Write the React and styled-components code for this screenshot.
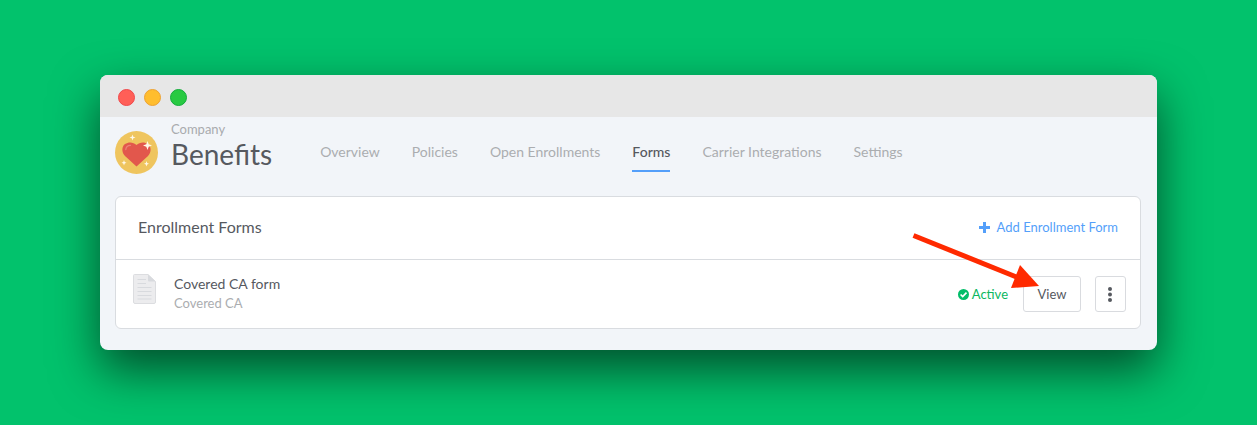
import React from "react";
import styled, { createGlobalStyle } from "styled-components";

const GlobalStyle = createGlobalStyle`
  *, *::before, *::after { box-sizing: border-box; }
  body {
    margin: 0;
    background: #02c26c;
    color: #56595f;
    font-family: Lato, "Liberation Sans", sans-serif;
    font-size: 14px;
    line-height: 20px;
  }
`;

const Page = styled.main`
  padding: 75px 100px;
`;

const Window = styled.div`
  border-radius: 8px;
  background: #f2f5f9;
  box-shadow: 0 20px 48px rgba(0, 0, 0, 0.6);
`;

const TitleBar = styled.div`
  display: flex;
  align-items: center;
  gap: 9px;
  height: 42px;
  padding: 2px 18px 0;
  border-radius: 8px 8px 0 0;
  background: #e7e7e7;
`;

const Light = styled.span`
  width: 17px;
  height: 17px;
  border: 1px solid ${(p) => p.$edge};
  border-radius: 50%;
  background: ${(p) => p.$fill};
`;

const Content = styled.div`
  padding: 0 16px 21px 15px;
`;

const Header = styled.header`
  display: flex;
  align-items: flex-start;
  height: 79px;
`;

const Badge = styled.svg`
  flex: none;
  width: 43px;
  height: 43px;
  margin-top: 14px;
`;

const Heading = styled.div`
  margin: 4px 48px 0 13px;
`;

const Eyebrow = styled.p`
  margin: 0;
  font-size: 13px;
  line-height: 16px;
  color: #a9abae;
`;

const Title = styled.h1`
  margin: 0;
  font-size: 28px;
  line-height: 34px;
  font-weight: 400;
`;

const Tabs = styled.nav`
  display: flex;
  gap: 32px;
  margin-top: 25px;
  white-space: nowrap;
`;

const Tab = styled.a`
  padding-bottom: 8px;
  border-bottom: 2px solid ${(p) => (p.$active ? "#549ffa" : "transparent")};
  color: ${(p) => (p.$active ? "#56595f" : "#abadb0")};
  font-weight: ${(p) => (p.$active ? 500 : 400)};
  text-decoration: none;
`;

const Card = styled.section`
  border: 1px solid #d9dce0;
  border-radius: 6px;
  background: #fff;
`;

const CardHeader = styled.div`
  display: flex;
  align-items: center;
  justify-content: space-between;
  height: 63px;
  padding: 0 22px 2px;
  border-bottom: 1px solid #d9dce0;
`;

const CardTitle = styled.h2`
  margin: 0;
  font-size: 16px;
  line-height: 20px;
  font-weight: 400;
`;

const AddButton = styled.button`
  display: flex;
  align-items: center;
  gap: 7px;
  padding: 0;
  border: 0;
  background: none;
  color: #549ffa;
  font: inherit;
  font-size: 13px;
  cursor: pointer;
`;

const FormRow = styled.div`
  display: flex;
  align-items: center;
  height: 68px;
  padding: 0 14px 0 17px;
`;

const FileIcon = styled.svg`
  flex: none;
  align-self: flex-start;
  width: 23px;
  height: 30px;
  margin: 14px 18px 0 0;
`;

const FormInfo = styled.div`
  flex: 1;
  padding-bottom: 2px;
`;

const FormName = styled.div`
  font-size: 14px;
  line-height: 20px;
`;

const Carrier = styled.div`
  font-size: 13px;
  line-height: 18px;
  color: #abadb0;
`;

const Status = styled.span`
  display: flex;
  align-items: center;
  gap: 3px;
  margin-right: 15px;
  color: #0cb75f;
  font-size: 13px;
`;

const ViewSlot = styled.div`
  position: relative;
  margin-right: 14px;
`;

const OutlineButton = styled.button`
  display: flex;
  align-items: center;
  justify-content: center;
  width: ${(p) => (p.$compact ? 31 : 58)}px;
  height: 36px;
  padding: 0;
  border: 1px solid #d9dbdf;
  border-radius: 3px;
  background: #fff;
  color: #56595f;
  font: inherit;
  font-size: 13px;
  cursor: pointer;
`;

const Pointer = styled.svg`
  position: absolute;
  right: 42px;
  bottom: 22px;
  width: 130px;
  height: 60px;
  pointer-events: none;
`;

const tabs = ["Overview", "Policies", "Open Enrollments", "Forms", "Carrier Integrations", "Settings"];

const HeartBadge = () => (
  <Badge viewBox="0 0 43 43" aria-hidden="true">
    <circle cx="21.5" cy="21.5" r="21.5" fill="#efc55f" />
    <path d="M21.5 35.5 10 25C6.500 21.500 6.500 15.600 10 13C13.600 10.600 18.500 11 21.500 14C24.500 11 29.400 10.600 33 13C36.500 15.600 36.500 21.500 33 25Z" fill="#e2574c" />
    <path d="M10.800 18.500C11 16 13 14.300 15.500 14.300" fill="none" stroke="#eb8178" strokeWidth="1.300" strokeLinecap="round" />
    <g fill="#fff8e8">
      <path d="M32.500 10 33.700 13.300 37 14.500 33.700 15.700 32.500 19 31.300 15.700 28 14.500 31.300 13.300Z" />
      <path d="M17.500 3.500 18.300 5.700 20.500 6.500 18.300 7.300 17.500 9.500 16.700 7.300 14.500 6.500 16.700 5.700Z" />
      <path d="M9 29 9.700 31 11.500 31.700 9.700 32.400 9 34.400 8.300 32.400 6.500 31.700 8.300 31Z" />
      <path d="M31.500 30 32.200 32 34 32.700 32.200 33.400 31.500 35.400 30.800 33.400 29 32.700 30.800 32Z" />
    </g>
  </Badge>
);

export default function App() {
  return (
    <>
      <GlobalStyle />
      <Page>
        <Window>
          <TitleBar>
            <Light $fill="#ff5f57" $edge="#f0484a" />
            <Light $fill="#ffbd2e" $edge="#eda233" />
            <Light $fill="#28ca42" $edge="#14ac3c" />
          </TitleBar>
          <Content>
            <Header>
              <HeartBadge />
              <Heading>
                <Eyebrow>Company</Eyebrow>
                <Title>Benefits</Title>
              </Heading>
              <Tabs aria-label="Benefits">
                {tabs.map((name) => (
                  <Tab key={name} href="#" $active={name === "Forms"} aria-current={name === "Forms" ? "page" : undefined}>
                    {name}
                  </Tab>
                ))}
              </Tabs>
            </Header>
            <Card>
              <CardHeader>
                <CardTitle>Enrollment Forms</CardTitle>
                <AddButton type="button">
                  <svg width="11" height="11" viewBox="0 0 11 11" aria-hidden="true">
                    <path d="M4 0H7V4H11V7H7V11H4V7H0V4H4Z" fill="#549ffa" />
                  </svg>
                  Add Enrollment Form
                </AddButton>
              </CardHeader>
              <FormRow>
                <FileIcon viewBox="0 0 23 30" aria-hidden="true">
                  <path d="M1.500.5H15L22.500 7.500V28Q22.500 29.500 21 29.500H2Q.5 29.500.5 28V1.500Q.5.5 1.500.5Z" fill="#ececee" stroke="#dcdde0" />
                  <path d="M15 .5 22.500 7.500H16Q15 7.500 15 6.500Z" fill="#d8dade" />
                  <path d="M4.500 5.500H13M4.500 9.500H13M4.500 13.500H18.500M4.500 17.500H18.500M4.500 21.500H18.500M4.500 25H18.500" stroke="#d8dade" />
                </FileIcon>
                <FormInfo>
                  <FormName>Covered CA form</FormName>
                  <Carrier>Covered CA</Carrier>
                </FormInfo>
                <Status>
                  <svg width="11" height="11" viewBox="0 0 11 11" aria-hidden="true">
                    <circle cx="5.500" cy="5.500" r="5.500" fill="#02bd69" />
                    <path d="M2.600 5.500 4.700 7.500 8.500 3.700" fill="none" stroke="#fff" strokeWidth="1.700" />
                  </svg>
                  Active
                </Status>
                <ViewSlot>
                  <OutlineButton type="button">View</OutlineButton>
                  <Pointer viewBox="0 0 130 60" aria-hidden="true">
                    <path d="M4.500 5.500 110 48" stroke="#ff2a00" strokeWidth="5" />
                    <path d="M130 56 111 35 102 58Z" fill="#ff2a00" />
                  </Pointer>
                </ViewSlot>
                <OutlineButton type="button" $compact aria-label="More actions">
                  <svg width="5" height="15" viewBox="0 0 5 15" fill="#56595f" aria-hidden="true">
                    <circle cx="2" cy="2" r="2" />
                    <circle cx="2" cy="7.500" r="2" />
                    <circle cx="2" cy="13" r="2" />
                  </svg>
                </OutlineButton>
              </FormRow>
            </Card>
          </Content>
        </Window>
      </Page>
    </>
  );
}
